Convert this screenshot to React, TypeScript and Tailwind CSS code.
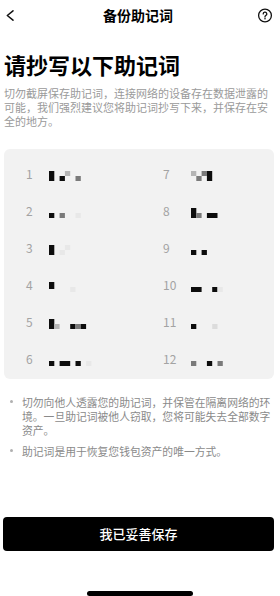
import React from 'react'

type Cell = [number, number, number, string, number?]

const K = '#0d0d0d'
const G = '#7a7a7a'
const LG = '#b5b5b5'
const F = '#e8e8e8'

// mosaic cells: [col, y, h, colour, cols]
const A = [1, 5] as const
const B = [6, 5] as const
const AB = [1, 10] as const

const words: Cell[][] = [
  [[0, ...AB, K], [2, ...B, K], [3, ...A, LG], [5, ...B, G]],
  [[0, ...B, K], [2, ...B, G], [5, ...B, F]],
  [[0, ...AB, K], [2, ...B, F], [3, ...A, F]],
  [[0, 1, 7, K], [4, ...B, F]],
  [[0, ...AB, K], [1, ...B, LG], [4, ...B, K], [5, ...B, G], [6, ...B, K]],
  [[0, ...B, K], [2, ...B, K, 2], [5, ...B, K], [7, ...B, F]],
  [[0, ...A, LG], [1, ...B, G], [2, ...A, G], [3, ...AB, K]],
  [[0, ...AB, K], [1, ...B, G], [3, ...B, K, 2]],
  [[0, ...B, K], [2, ...B, K]],
  [[0, ...B, K, 2], [4, ...B, K], [5, ...B, F]],
  [[0, ...B, K], [4, ...B, '#dcdcdc']],
  [[0, ...B, G], [3, ...B, K], [5, ...B, G]],
]

const STEP = 5.3

const Mosaic = ({ cells }: { cells: Cell[] }) => (
  <svg className="mt-[4px] h-[12px] w-[50px]" viewBox="0 0 50 12">
    {cells.map(([col, y, h, c, n], i) => (
      <rect key={i} x={col * STEP} y={y} width={STEP * (n || 1)} height={h} fill={c} />
    ))}
  </svg>
)

const Column = ({ start, numW }: { start: number; numW: string }) => (
  <div className="flex flex-col">
    {words.slice(start, start + 6).map((w, i) => (
      <div key={i} className="flex h-[37px] items-center">
        <span className={`${numW} text-[12px] leading-none text-[#a3a3a3]`}>{start + i + 1}</span>
        <Mosaic cells={w} />
      </div>
    ))}
  </div>
)

const App = () => {
  return (
    <div
      className="flex h-[596px] w-[280px] flex-col bg-white text-black"
      style={{ fontFamily: '"Noto Sans CJK SC", "Noto Sans", sans-serif' }}
    >
      <div className="flex h-[30px] items-center justify-between pl-[3px] pr-[7px]">
        <svg className="h-[16px] w-[16px]" viewBox="0 0 16 16" fill="none">
          <path d="M10 3.8 L4.3 8.5 L10 13.2" stroke="#111" strokeWidth="1.5" strokeLinecap="round" strokeLinejoin="round" />
        </svg>
        <span className="text-[14px] font-bold leading-none">备份助记词</span>
        <svg className="h-[16px] w-[16px]" viewBox="0 0 16 16" fill="none">
          <circle cx="8" cy="8.5" r="6.4" stroke="#111" strokeWidth="1.3" />
          <path d="M6.2 6.9a1.8 1.8 0 1 1 2.6 1.6c-.5.3-.8.6-.8 1.2v.3" stroke="#111" strokeWidth="1.3" strokeLinecap="round" />
          <circle cx="8" cy="11.7" r="0.8" fill="#111" />
        </svg>
      </div>

      <div className="flex flex-col pl-[4px] pr-[6px]">
        <h1 className="mt-[20px] text-[22px] font-bold leading-[28px]">请抄写以下助记词</h1>
        <p className="mt-[8px] text-[11px] leading-[14px] text-[#9a9a9a]">
          切勿截屏保存助记词，连接网络的设备存在数据泄露的可能，我们强烈建议您将助记词抄写下来，并保存在安全的地方。
        </p>

        <div className="mt-[21px] grid h-[230px] grid-cols-[137px_1fr] rounded-[6px] bg-[#f2f2f2] pl-[22px] pt-[6px]">
          <Column start={0} numW="w-[23px]" />
          <Column start={6} numW="w-[28px]" />
        </div>

        <div className="mt-[16px] flex flex-col gap-[7px] text-[10.8px] leading-[14px] text-[#8a8a8a]">
          <div className="flex">
            <span className="ml-[6px] mt-[5px] h-[3px] w-[3px] shrink-0 rounded-full bg-[#b0b0b0]" />
            <p className="ml-[9px]">切勿向他人透露您的助记词，并保管在隔离网络的环境。一旦助记词被他人窃取，您将可能失去全部数字资产。</p>
          </div>
          <div className="flex">
            <span className="ml-[6px] mt-[5px] h-[3px] w-[3px] shrink-0 rounded-full bg-[#b0b0b0]" />
            <p className="ml-[9px]">助记词是用于恢复您钱包资产的唯一方式。</p>
          </div>
        </div>

        <button className="-ml-px mt-[59px] flex h-[34px] w-[271px] items-center justify-center rounded-[4px] bg-black text-[13px] font-medium text-white">
          我已妥善保存
        </button>
      </div>

      <div className="mx-auto mt-[40px] h-[5px] w-[106px] rounded-full bg-black" />
    </div>
  )
}

export default App
